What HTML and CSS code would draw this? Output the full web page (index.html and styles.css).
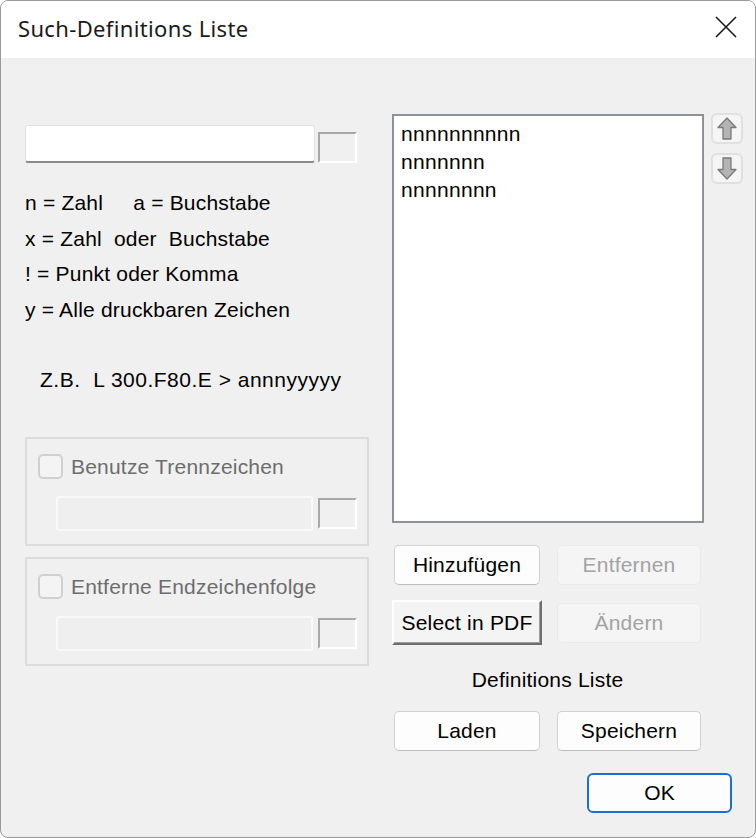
FILE: index.html
```html
<!DOCTYPE html>
<html lang="de">
	<head>
		<meta charset="utf-8">
		<title>Such-Definitions Liste</title>
		<link rel="stylesheet" href="styles.css">
	</head>
	<body>
		<div class="window">
			<div class="titlebar">
				<span class="title">Such-Definitions Liste</span>
				<svg class="close" width="22" height="22" viewBox="0 0 22 22">
					<path d="M1 1 L21 21 M21 1 L1 21" stroke="#1a1a1a" stroke-width="1.6" fill="none"/>
				</svg>
			</div>

			<div class="content">
				<!-- left: pattern entry and legend -->
				<div class="left">
					<div class="entry">
						<div class="textbox"></div>
						<div class="smallbox"></div>
					</div>
					<div class="legend">
						<div>n = Zahl&nbsp;&nbsp;&nbsp;&nbsp;&nbsp;a = Buchstabe</div>
						<div>x = Zahl&nbsp;&nbsp;oder&nbsp;&nbsp;Buchstabe</div>
						<div>! = Punkt oder Komma</div>
						<div>y = Alle druckbaren Zeichen</div>
					</div>
					<div class="sample">Z.B.&nbsp;&nbsp;L 300.F80.E &gt; annnyyyyy</div>

					<div class="group">
						<label class="check"><span class="box"></span>Benutze Trennzeichen</label>
						<div class="subentry">
							<div class="textbox off"></div>
							<div class="smallbox"></div>
						</div>
					</div>
					<div class="group">
						<label class="check"><span class="box"></span>Entferne Endzeichenfolge</label>
						<div class="subentry">
							<div class="textbox off"></div>
							<div class="smallbox"></div>
						</div>
					</div>
				</div>

				<!-- right: definition list and actions -->
				<div class="right">
					<div class="listrow">
						<div class="listbox">
							<div>nnnnnnnnnn</div>
							<div>nnnnnnn</div>
							<div>nnnnnnnn</div>
						</div>
						<div class="arrows">
							<div class="arrow">
								<svg width="20" height="23" viewBox="0 0 20 23">
									<polygon points="10,1 19,10.5 14,10.5 14,22 6,22 6,10.5 1,10.5" fill="#b4b4b4" stroke="#7a7a7a" stroke-width="1.3" stroke-linejoin="round"/>
								</svg>
							</div>
							<div class="arrow">
								<svg width="20" height="23" viewBox="0 0 20 23">
									<polygon points="10,22 19,12.5 14,12.5 14,1 6,1 6,12.5 1,12.5" fill="#b4b4b4" stroke="#7a7a7a" stroke-width="1.3" stroke-linejoin="round"/>
								</svg>
							</div>
						</div>
					</div>

					<div class="buttons">
						<button class="btn">Hinzufügen</button>
						<button class="btn" disabled>Entfernen</button>
						<button class="btn classic">Select in PDF</button>
						<button class="btn" disabled>Ändern</button>
						<div class="caption">Definitions Liste</div>
						<button class="btn">Laden</button>
						<button class="btn">Speichern</button>
					</div>

					<div class="footer">
						<button class="btn ok">OK</button>
					</div>
				</div>
			</div>
		</div>
	</body>
</html>
```

FILE: styles.css
```css
body {
	margin: 0;
	background: #fff;
	font-family: "Liberation Sans", Arial, sans-serif;
	font-size: 21px;
	letter-spacing: 0.2px;
	color: #000;
}
.window {
	box-sizing: border-box;
	width: 756px;
	height: 838px;
	background: #f0f0f0;
	border: 1px solid #9a9a9a;
	border-radius: 8px;
	overflow: hidden;
}
.titlebar {
	height: 57px;
	background: #fff;
	display: flex;
	align-items: center;
	justify-content: space-between;
	padding: 0 18px 0 17px;
}
.title {
	font-family: "Noto Sans", "Open Sans", sans-serif;
	font-size: 22px;
	letter-spacing: 0.35px;
	color: #1a1a1a;
	margin-top: -3px;
}
.close {
	margin-top: -6px;
}
.content {
	display: flex;
	gap: 23px;
	padding-left: 24px;
}

/* left column */
.left {
	width: 344px;
	padding-top: 67px;
}
.entry {
	display: flex;
	align-items: flex-end;
	gap: 3px;
}
.textbox {
	box-sizing: border-box;
	width: 290px;
	height: 38px;
	background: #fff;
	border: 1px solid #e3e3e3;
	border-bottom: 2px solid #8a8a8a;
	border-radius: 3px;
}
.smallbox {
	box-sizing: border-box;
	width: 39px;
	height: 31px;
	border: 2px solid #fff;
	border-top-color: #a8a8a8;
	border-left-color: #a8a8a8;
}
.legend {
	margin-top: 22px;
	line-height: 35.6px;
}
.sample {
	margin-top: 35px;
	padding-left: 15px;
	line-height: 36px;
	letter-spacing: 0.5px;
}
.group {
	box-sizing: border-box;
	height: 109px;
	margin-top: 39px;
	border: 2px solid #dcdcdc;
	padding: 15px 0 0 11px;
}
.group + .group {
	margin-top: 11px;
}
.check {
	display: flex;
	align-items: center;
	gap: 8px;
	color: #6d6d6d;
	line-height: 25px;
}
.box {
	box-sizing: border-box;
	width: 25px;
	height: 25px;
	border: 2px solid #d0d0d0;
	border-radius: 5px;
	background: #f4f4f4;
}
.subentry {
	display: flex;
	align-items: center;
	gap: 5px;
	margin-top: 17px;
	padding-left: 18px;
}
.textbox.off {
	width: 257px;
	height: 35px;
	background: #efefef;
	border: 2px solid #f9f9f9;
	border-radius: 2px;
}

/* right column */
.right {
	width: 351px;
	padding-top: 55px;
}
.listrow {
	display: flex;
	gap: 7px;
}
.listbox {
	box-sizing: border-box;
	width: 312px;
	height: 409px;
	margin-top: 1px;
	background: #fff;
	border: 2px solid #8e9197;
	padding: 4px 7px;
	line-height: 28px;
	letter-spacing: 0.3px;
}
.arrows {
	display: flex;
	flex-direction: column;
	gap: 9px;
}
.arrow {
	box-sizing: border-box;
	width: 32px;
	height: 31px;
	background: #f5f5f5;
	border: 2px solid #e0e0e0;
	border-radius: 6px;
	display: flex;
	align-items: center;
	justify-content: center;
}
.buttons {
	display: grid;
	grid-template-columns: 146px 144px;
	column-gap: 17px;
	row-gap: 18px;
	margin: 22px 0 0 2px;
}
.btn {
	box-sizing: border-box;
	height: 40px;
	padding: 0;
	font-family: inherit;
	font-size: 21px;
	letter-spacing: 0.2px;
	color: #000;
	background: #fdfdfd;
	border: 1px solid #d2d2d2;
	border-bottom-color: #bdbdbd;
	border-radius: 5px;
}
.btn:disabled {
	color: #a3a3a3;
	background: #f5f5f5;
	border-color: #ebebeb;
}
.btn.classic {
	height: 45px;
	margin: -3px -2px -2px -2px;
	background: #f4f4f4;
	border: 2px solid #fff;
	border-right-color: #6e6e6e;
	border-bottom-color: #6e6e6e;
	border-radius: 0;
	box-shadow: inset -1px -1px 0 #a0a0a0;
}
.caption {
	grid-column: 1 / 3;
	text-align: center;
	line-height: 24px;
	margin: 7px 0 1px;
}
.footer {
	display: flex;
	justify-content: flex-end;
	padding-right: 11px;
	margin-top: 22px;
}
.btn.ok {
	width: 145px;
	border: 2px solid #1b6fd0;
	border-radius: 6px;
	background: #fdfdfd;
}
```
